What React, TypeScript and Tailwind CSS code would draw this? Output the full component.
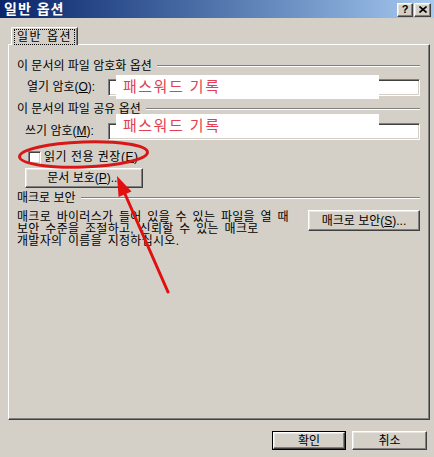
import React from 'react'

const raised =
  'border border-t-white border-l-white border-r-[#404040] border-b-[#404040] shadow-[inset_-1px_-1px_0_#808080,inset_1px_1px_0_#e8e6e1] bg-[#d4d0c8]'
const sunken =
  'border border-t-[#808080] border-l-[#808080] border-r-white border-b-white shadow-[inset_1px_1px_0_#404040,inset_-1px_-1px_0_#d4d0c8] bg-white'

function Etched() {
  return <div className="flex-1 h-[2px] border-t border-t-[#808080] border-b border-b-white" />
}

function Header({ children }: { children: React.ReactNode }) {
  return (
    <div className="flex items-center gap-[5px] h-[14px] leading-[14px]">
      <span className="whitespace-nowrap">{children}</span>
      <Etched />
    </div>
  )
}

function Annotation({ top }: { top: number }) {
  return (
    <div
      className="absolute left-[116px] w-[263px] h-[24px] bg-white flex items-center pl-[7px] text-[15px] text-[#e2404f] tracking-[1.5px]"
      style={{ top }}
    >
      패스워드 기록
    </div>
  )
}

export default function App() {
  return (
    <div className="relative w-[434px] h-[457px] bg-[#d4d0c8] overflow-hidden text-[12px] text-black font-['Liberation_Sans','Noto_Sans_CJK_KR',sans-serif]">
      {/* title bar */}
      <div className="h-[18px] flex items-center justify-between pl-[4px] pr-[3px] bg-gradient-to-r from-[#0a246a] to-[#a6caf0]">
        <span className="text-white font-bold text-[14px] leading-[18px] tracking-[1px]">일반 옵션</span>
        <div className="flex gap-[1px] pt-[1px]">
          <div className={`${raised} w-[16px] h-[14px] flex items-center justify-center text-[11px] font-bold leading-none`}>?</div>
          <div className={`${raised} w-[17px] h-[14px] flex items-center justify-center`}>
            <svg width="8" height="7" viewBox="0 0 8 7">
              <path d="M0.5 0.5 L7.5 6.5 M7.5 0.5 L0.5 6.5" stroke="black" strokeWidth="1.6" />
            </svg>
          </div>
        </div>
      </div>

      <div className="pl-[8px] pr-[4px] pt-[9px]">
        {/* tab */}
        <div className="flex pl-[3px]">
          <div className="relative z-10 -mb-[1px] h-[18px] w-[67px] bg-[#d4d0c8] border-t border-l border-t-white border-l-white border-r border-r-[#404040] shadow-[inset_-1px_0_0_#808080] rounded-tl-[2px] flex items-center justify-center">
            <span className="px-[2px] py-[1px] leading-[12px] border border-dotted border-black tracking-[1.5px] whitespace-nowrap">일반 옵션</span>
          </div>
        </div>

        {/* panel */}
        <div className="h-[376px] border-t border-l border-t-white border-l-white border-r border-b border-r-[#404040] border-b-[#404040] shadow-[inset_-1px_-1px_0_#808080] pl-[8px] pr-[9px] pt-[14px] flex flex-col">
          <Header>이 문서의 파일 암호화 옵션</Header>
          <div className="flex items-center mt-[5px] pl-[10px]">
            <span className="w-[81px] whitespace-nowrap">열기 암호(<u>O</u>):</span>
            <div className={`${sunken} flex-1 h-[17px]`} />
          </div>

          <div className="mt-[6px]">
            <Header>이 문서의 파일 공유 옵션</Header>
          </div>
          <div className="flex items-center mt-[6px] pl-[8px]">
            <span className="w-[83px] whitespace-nowrap">쓰기 암호(<u>M</u>):</span>
            <div className={`${sunken} flex-1 h-[17px]`} />
          </div>

          <div className="flex items-center gap-[3px] mt-[10px] pl-[11px] h-[14px]">
            <div className={`${sunken} w-[13px] h-[13px]`} />
            <span className="whitespace-nowrap tracking-[0.5px]">읽기 전용 권장(<u>E</u>)</span>
          </div>

          <div className={`${raised} mt-[4px] ml-[8px] w-[118px] h-[20px] flex items-center justify-center`}>
            문서 보호(<u>P</u>)...
          </div>

          <div className="mt-[3px]">
            <Header>매크로 보안</Header>
          </div>
          <div className="flex items-start justify-between mt-[5px]">
            <p className="pt-[1px] leading-[12px] whitespace-nowrap tracking-[0.3px] [word-spacing:2px]">
              매크로 바이러스가 들어 있을 수 있는 파일을 열 때
              <br />
              보안 수준을 조절하고, 신뢰할 수 있는 매크로
              <br />
              개발자의 이름을 지정하십시오.
            </p>
            <div className={`${raised} w-[112px] h-[21px] flex items-center justify-center shrink-0`}>
              매크로 보안(<u>S</u>)...
            </div>
          </div>
        </div>
      </div>

      {/* bottom buttons */}
      <div className="flex justify-end gap-[6px] pr-[7px] mt-[11px]">
        <div className="border border-black w-[74px] h-[19px] flex">
          <div className={`${raised} flex-1 flex items-center justify-center`}>확인</div>
        </div>
        <div className={`${raised} w-[75px] h-[19px] flex items-center justify-center`}>취소</div>
      </div>

      {/* annotations */}
      <Annotation top={75} />
      <Annotation top={114} />
      <svg className="absolute left-0 top-0 pointer-events-none" width="434" height="457">
        <ellipse cx="83.5" cy="154.5" rx="64" ry="12.5" transform="rotate(-2 83.5 154.5)" fill="none" stroke="#d81818" strokeWidth="3" />
        <line x1="168" y1="292" x2="125" y2="194" stroke="#e01010" strokeWidth="3" strokeLinecap="round" />
        <polygon points="117,176 131.5,191.5 118.6,197.1" fill="#e01010" />
      </svg>
    </div>
  )
}
